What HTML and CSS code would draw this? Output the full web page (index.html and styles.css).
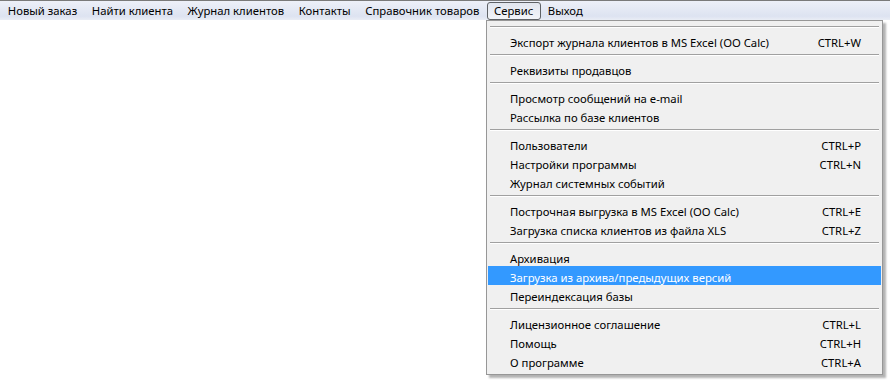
FILE: index.html
```html
<!DOCTYPE html>
<html>

<head>
    <title>Сервис</title>
    <link rel="stylesheet" href="styles.css">
</head>

<body>
    <div class="menubar">
        <span class="top-item">Новый заказ</span>
        <span class="top-item">Найти клиента</span>
        <span class="top-item">Журнал клиентов</span>
        <span class="top-item">Контакты</span>
        <span class="top-item">Справочник товаров</span>
        <span class="top-item open">Сервис</span>
        <span class="top-item">Выход</span>
    </div>

    <div class="dropdown">
        <div class="sep"></div>
        <div class="row"><span>Экспорт журнала клиентов в MS Excel (OO Calc)</span><span>CTRL+W</span></div>
        <div class="sep"></div>
        <div class="row"><span>Реквизиты продавцов</span><span></span></div>
        <div class="sep"></div>
        <div class="row"><span>Просмотр сообщений на e-mail</span><span></span></div>
        <div class="row"><span>Рассылка по базе клиентов</span><span></span></div>
        <div class="sep"></div>
        <div class="row"><span>Пользователи</span><span>CTRL+P</span></div>
        <div class="row"><span>Настройки программы</span><span>CTRL+N</span></div>
        <div class="row"><span>Журнал системных событий</span><span></span></div>
        <div class="sep"></div>
        <div class="row"><span>Построчная выгрузка в MS Excel (OO Calc)</span><span>CTRL+E</span></div>
        <div class="row"><span>Загрузка списка клиентов из файла XLS</span><span>CTRL+Z</span></div>
        <div class="sep"></div>
        <div class="row"><span>Архивация</span><span></span></div>
        <div class="row active"><span>Загрузка из архива/предыдущих версий</span><span></span></div>
        <div class="row"><span>Переиндексация базы</span><span></span></div>
        <div class="sep"></div>
        <div class="row"><span>Лицензионное соглашение</span><span>CTRL+L</span></div>
        <div class="row"><span>Помощь</span><span>CTRL+H</span></div>
        <div class="row"><span>О программе</span><span>CTRL+A</span></div>
    </div>
</body>

</html>
```

FILE: styles.css
```css
body {
    margin: 0;
    background-color: #FFFFFF;
    color: #000000;
    font-family: "Noto Sans", "Open Sans", sans-serif;
    font-size: 11.3px;
}

.menubar {
    display: flex;
    align-items: center;
    height: 19px;
    padding-left: 0.5px;
    border-top: 1px solid #7a7a7a;
    background: linear-gradient(to bottom, #edf0f8, #dde3f1 80%, #eaedf5);
}

.top-item {
    padding: 0 6.3px;
    line-height: 16px;
    border: 1px solid transparent;
}

.top-item.open {
    border-color: #5f6266;
    border-radius: 3px;
    background: linear-gradient(to bottom, #e2e6ef, #f2f4f8);
}

.dropdown {
    position: absolute;
    left: 486px;
    top: 20px;
    width: 393px;
    padding: 1px 1px 4px 1px;
    background-color: #F0F0F0;
    border: 1px solid #979797;
    box-shadow: 3px 3px 2px rgba(0, 0, 0, 0.3);
}

.sep {
    height: 9px;
    display: flex;
    align-items: center;
    padding: 0 2px;
}

.sep::before {
    content: "";
    flex: 1;
    height: 1px;
    border-bottom: 1px solid #FFFFFF;
    background-color: #A0A0A0;
}

.row {
    display: flex;
    justify-content: space-between;
    height: 17px;
    padding: 2px 20px 0 22px;
    line-height: 19px;
}

.row.active {
    background-color: #3399FF;
    color: #FFFFFF;
}
```
